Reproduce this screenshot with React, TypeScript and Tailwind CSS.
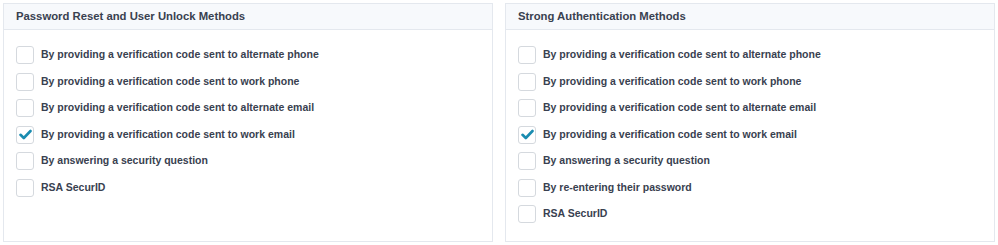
import React from "react";

const left = [
  { label: "By providing a verification code sent to alternate phone", checked: false },
  { label: "By providing a verification code sent to work phone", checked: false },
  { label: "By providing a verification code sent to alternate email", checked: false },
  { label: "By providing a verification code sent to work email", checked: true },
  { label: "By answering a security question", checked: false },
  { label: "RSA SecurID", checked: false },
];

const right = [
  { label: "By providing a verification code sent to alternate phone", checked: false },
  { label: "By providing a verification code sent to work phone", checked: false },
  { label: "By providing a verification code sent to alternate email", checked: false },
  { label: "By providing a verification code sent to work email", checked: true },
  { label: "By answering a security question", checked: false },
  { label: "By re-entering their password", checked: false },
  { label: "RSA SecurID", checked: false },
];

function Box({ checked }: { checked: boolean }) {
  return (
    <span className="flex h-[18px] w-[18px] shrink-0 items-center justify-center rounded-[3px] border border-[#d5d9de] bg-white">
      {checked && (
        <svg width="13" height="11" viewBox="0 0 13 11">
          <path d="M1.5 5.8 L4.8 9 L11.5 2" fill="none" stroke="#1a8cb0" strokeWidth="2.6" strokeLinecap="round" strokeLinejoin="round" />
        </svg>
      )}
    </span>
  );
}

function Panel({ title, items }: { title: string; items: { label: string; checked: boolean }[] }) {
  return (
    <div className="flex flex-1 flex-col border border-[#e4e8ee] bg-white">
      <div className="flex h-[26px] items-center border-b border-[#e4e8ee] bg-[#f7f9fc] px-3 text-[11.3px] font-bold text-[#394150]">
        {title}
      </div>
      <div className="flex flex-col gap-[8.5px] px-3 pt-[16px] pb-[18px]">
        {items.map((it, i) => (
          <div key={i} className="flex items-center gap-[7px]">
            <Box checked={it.checked} />
            <span className="text-[10.5px] font-bold text-[#394150]">{it.label}</span>
          </div>
        ))}
      </div>
    </div>
  );
}

export default function App() {
  return (
    <div className="flex gap-3 bg-white px-[3px] pt-[3px]" style={{ fontFamily: '"Liberation Sans", Arial, sans-serif' }}>
      <Panel title="Password Reset and User Unlock Methods" items={left} />
      <Panel title="Strong Authentication Methods" items={right} />
    </div>
  );
}
